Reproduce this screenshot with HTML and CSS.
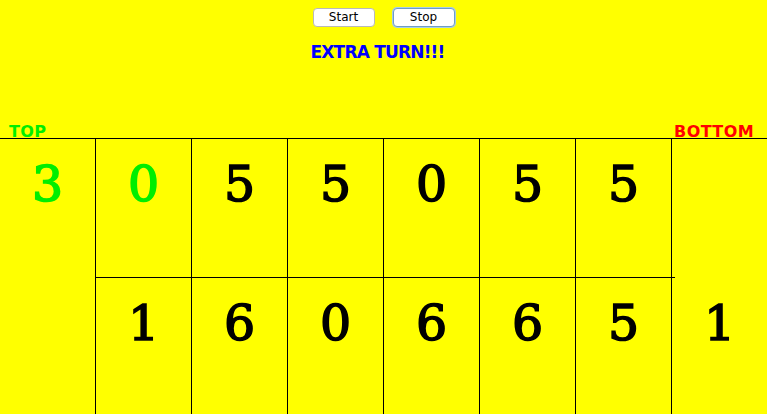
FILE: index.html
```html
<!DOCTYPE html>
<html>
<head>
<meta charset="utf-8">
<title>Mancala</title>
<link rel="stylesheet" href="styles.css">
</head>
<body>
<div class="header">
  <div class="controls">
    <button class="btn">Start</button>
    <button class="btn btn-focus">Stop</button>
  </div>
  <div class="status">EXTRA TURN!!!</div>
  <div class="labels">
    <span class="label-top">TOP</span>
    <span class="label-bottom">BOTTOM</span>
  </div>
</div>
<div class="board">
  <div class="store store-left"><span class="num green">3</span></div>
  <div class="pit pit-top"><span class="num green">0</span></div>
  <div class="pit pit-top"><span class="num">5</span></div>
  <div class="pit pit-top"><span class="num">5</span></div>
  <div class="pit pit-top"><span class="num">0</span></div>
  <div class="pit pit-top"><span class="num">5</span></div>
  <div class="pit pit-top pit-last"><span class="num">5</span></div>
  <div class="store store-right"><span class="num">1</span></div>
  <div class="pit pit-bottom"><span class="num">1</span></div>
  <div class="pit pit-bottom"><span class="num">6</span></div>
  <div class="pit pit-bottom"><span class="num">0</span></div>
  <div class="pit pit-bottom"><span class="num">6</span></div>
  <div class="pit pit-bottom"><span class="num">6</span></div>
  <div class="pit pit-bottom"><span class="num">5</span></div>
</div>
</body>
</html>
```
FILE: styles.css
```css
html, body {
  margin: 0;
  padding: 0;
  background: #ffff00;
  overflow: hidden;
}
body {
  width: 767px;
  height: 414px;
  font-family: "DejaVu Sans", sans-serif;
}
.header {
  height: 138px;
  display: flex;
  flex-direction: column;
}
.controls {
  display: flex;
  justify-content: center;
  gap: 18px;
  padding-top: 8px;
}
.btn {
  width: 62px;
  height: 19px;
  padding: 0;
  margin: 0;
  background: #ffffff;
  border: 1px solid #b9b9b9;
  border-radius: 4px;
  font-family: "DejaVu Sans", sans-serif;
  font-size: 12px;
  line-height: 17px;
  color: #000;
}
.btn-focus {
  border-color: #6f9dc6;
  box-shadow: 0 0 0 1px #a8cce8;
}
.status {
  margin-top: 15px;
  padding-right: 12px;
  text-align: center;
  font-weight: bold;
  font-size: 17px;
  line-height: 20px;
  letter-spacing: -0.8px;
  color: #0000ff;
}
.labels {
  margin-top: auto;
  display: flex;
  justify-content: space-between;
  font-weight: bold;
  font-size: 16px;
  line-height: 12px;
  letter-spacing: 0.4px;
  padding: 0 13px 0 9px;
}
.label-top { color: #00ee00; }
.label-bottom { color: #ff0000; }
.board {
  display: grid;
  grid-template-columns: 95px repeat(6, 96px) 1fr;
  grid-template-rows: 139px 137px;
  border-top: 1px solid #000;
}
.store-left { grid-row: 1 / 3; grid-column: 1; }
.store-right { grid-row: 1 / 3; grid-column: 8; border-left: 1px solid #000; }
.pit { border-left: 1px solid #000; }
.pit-top { border-bottom: 1px solid #000; }
.pit-last { position: relative; }
.pit-last::after {
  content: "";
  position: absolute;
  right: -4px;
  bottom: -1px;
  width: 4px;
  height: 1px;
  background: #000;
}
.num {
  display: block;
  text-align: center;
  font-family: "DejaVu Serif", serif;
  font-size: 49px;
  line-height: 50px;
  padding-top: 21px;
  color: #000;
  -webkit-text-stroke: 1.6px #000;
}
.store-right .num { padding-top: 160px; }
.num.green { color: #00ee00; -webkit-text-stroke-color: #00ee00; }
```
